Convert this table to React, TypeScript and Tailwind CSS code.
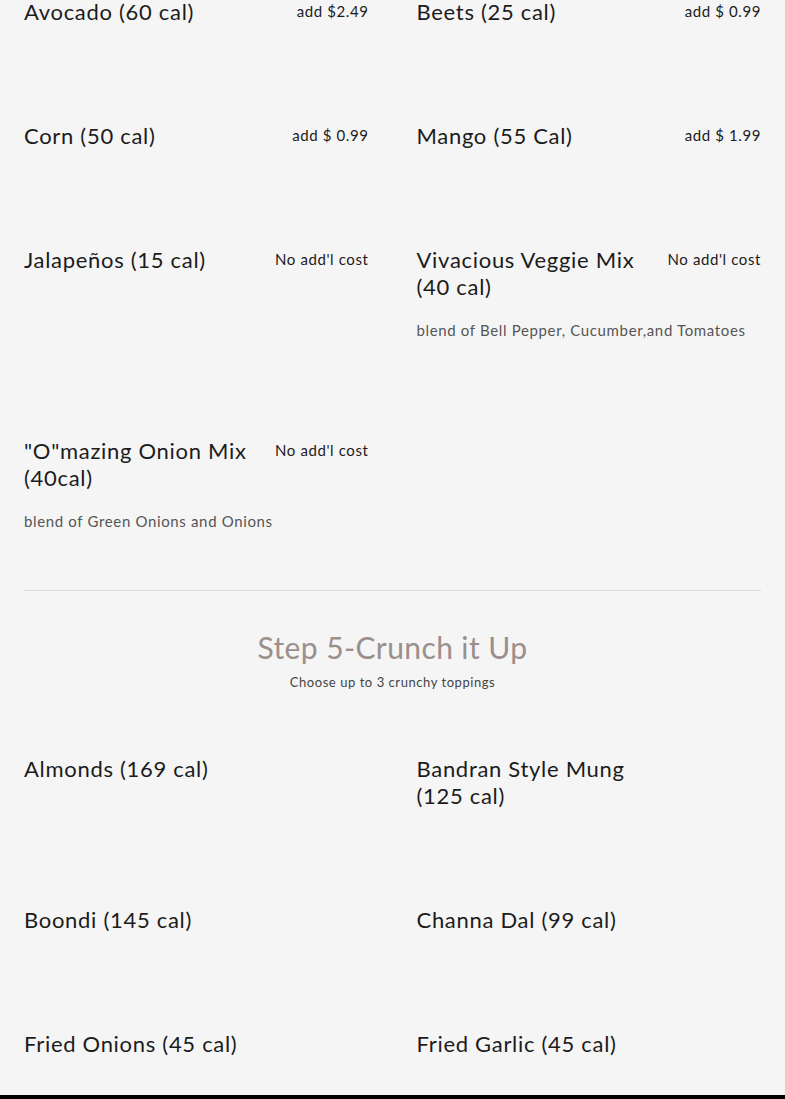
import React from "react";

type Item = { title: string; price?: string; desc?: string };

const veggies: Item[] = [
  { title: "Avocado (60 cal)", price: "add $2.49" },
  { title: "Beets (25 cal)", price: "add $ 0.99" },
  { title: "Corn (50 cal)", price: "add $ 0.99" },
  { title: "Mango (55 Cal)", price: "add $ 1.99" },
  { title: "Jalapeños (15 cal)", price: "No add'l cost" },
  {
    title: "Vivacious Veggie Mix (40 cal)",
    price: "No add'l cost",
    desc: "blend of Bell Pepper, Cucumber,and Tomatoes",
  },
  {
    title: "\"O\"mazing Onion Mix (40cal)",
    price: "No add'l cost",
    desc: "blend of Green Onions and Onions",
  },
];

const crunch: Item[] = [
  { title: "Almonds (169 cal)" },
  { title: "Bandran Style Mung (125 cal)" },
  { title: "Boondi (145 cal)" },
  { title: "Channa Dal (99 cal)" },
  { title: "Fried Onions (45 cal)" },
  { title: "Fried Garlic (45 cal)" },
];

function MenuItem({ item }: { item: Item }) {
  return (
    <div className="pb-[38px]">
      <div className="flex items-start justify-between gap-4">
        <div className="w-[228px] text-[22px] leading-[27px] tracking-[0.7px] text-[#1c1c1c]">
          {item.title}
        </div>
        {item.price && (
          <div className="shrink-0 text-[15px] leading-[27px] tracking-[0.6px] text-[#1c1c1c]">
            {item.price}
          </div>
        )}
      </div>
      {item.desc && (
        <div className="mt-[20px] text-[15px] leading-[20px] tracking-[0.65px] text-[#555555]">
          {item.desc}
        </div>
      )}
    </div>
  );
}

export default function App() {
  return (
    <div
      className="min-h-[1099px] bg-[#f5f5f5]"
      style={{ fontFamily: "Lato, 'Open Sans', sans-serif" }}
    >
      <div className="-mt-[2px] px-6">
        <div className="grid grid-cols-2 gap-x-12 gap-y-[59px]">
          {veggies.map((v) => (
            <MenuItem key={v.title} item={v} />
          ))}
        </div>
        <div className="mt-[21px] h-px bg-[#dcdcdc]" />
        <div className="mt-[36px] flex flex-col items-center">
          <h2 className="text-[30px] leading-[40px] tracking-[0.4px] text-[#9b8f8b]">
            Step 5-Crunch it Up
          </h2>
          <p className="mt-[6px] text-[13px] leading-[18px] tracking-[0.55px] text-[#444444]">
            Choose up to 3 crunchy toppings
          </p>
        </div>
        <div className="mt-[64px] grid grid-cols-2 gap-x-12 gap-y-[59px]">
          {crunch.map((v) => (
            <MenuItem key={v.title} item={v} />
          ))}
        </div>
      </div>
      <div className="h-[3px] bg-black" />
      <div className="h-10 bg-black" />
    </div>
  );
}
